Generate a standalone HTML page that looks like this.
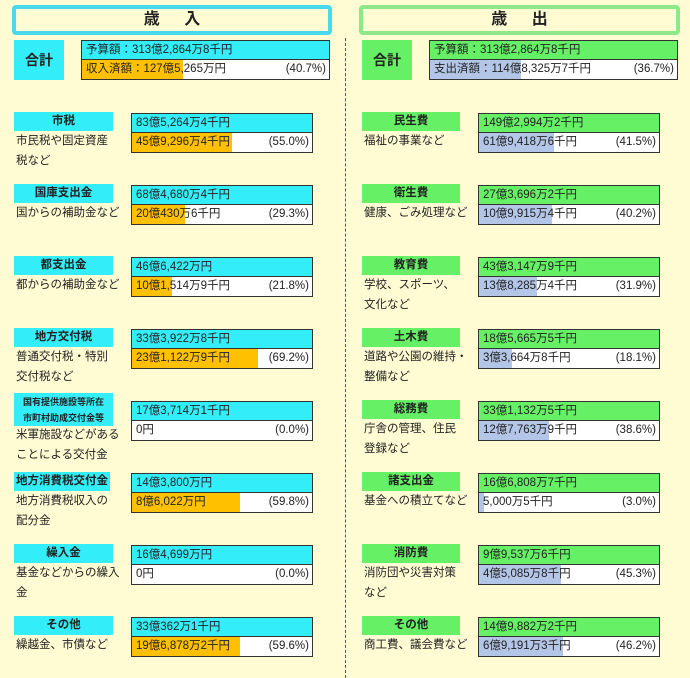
<!DOCTYPE html><html><head><meta charset="utf-8"><style>
*{margin:0;padding:0;box-sizing:border-box}
body{width:690px;height:678px;background:#fff;font-family:"Liberation Sans","Noto Sans CJK JP",sans-serif;font-size:11.5px;color:#222;position:relative;overflow:hidden}
.bg{position:absolute;left:0;top:0;width:690px;height:678px;background:#fffbd2}
.title{position:absolute;top:5px;height:30px;border-radius:4px;background:#fffbd2;text-align:center;font-weight:bold;font-size:16px;line-height:22px;letter-spacing:10px;padding-left:10px}
.lab{position:absolute;height:19px;text-align:center;font-weight:bold;line-height:19px;font-size:11.5px}
.box{position:absolute;border:1px solid #333;background:#fff}
.r1{height:19px;line-height:19px;padding-left:4px;border-bottom:1px solid #333}
.r2{height:19px;line-height:19px;position:relative}
.fill{position:absolute;left:0;top:0;bottom:0}
.t{position:absolute;left:4px;top:0}
.p{position:absolute;right:3px;top:0}
.desc{position:absolute;line-height:20px;font-size:11.5px}
.c{background:#33eef8}.g{background:#66f066}.o{background:#ffc000}.b{background:#b4c6e7}
.div{position:absolute;left:345px;top:38px;height:640px;border-left:1px dashed #555}
</style></head><body><div class="bg"></div>
<div class="title" style="left:12px;width:320px;border:4px solid #4ad8ec">歳 入</div>
<div class="title" style="left:359px;width:321px;border:4px solid #8ee88a">歳 出</div>
<div class="div"></div>

<div class="lab c" style="left:14px;top:40px;width:50px;height:40px;line-height:40px;font-size:14px">合計</div>
<div class="box" style="left:81px;top:40px;width:249px;height:40px"><div class="r1 c">予算額：313億2,864万8千円</div><div class="r2"><div class="fill o" style="width:101px"></div><span class="t">収入済額：127億5,265万円</span><span class="p">(40.7%)</span></div></div>

<div class="lab g" style="left:362px;top:40px;width:50px;height:40px;line-height:40px;font-size:14px">合計</div>
<div class="box" style="left:429px;top:40px;width:249px;height:40px"><div class="r1 g">予算額：313億2,864万8千円</div><div class="r2"><div class="fill b" style="width:91px"></div><span class="t">支出済額：114億8,325万7千円</span><span class="p">(36.7%)</span></div></div>

<div class="lab c" style="left:14px;top:112px;width:99px">市税</div>
<div class="desc" style="left:16px;top:131px">市民税や固定資産<br>税など</div>
<div class="box" style="left:131px;top:113px;width:182px;height:40px"><div class="r1 c">83億5,264万4千円</div><div class="r2"><div class="fill o" style="width:100px"></div><span class="t">45億9,296万4千円</span><span class="p">(55.0%)</span></div></div>

<div class="lab c" style="left:14px;top:184px;width:99px">国庫支出金</div>
<div class="desc" style="left:16px;top:203px">国からの補助金など</div>
<div class="box" style="left:131px;top:185px;width:182px;height:40px"><div class="r1 c">68億4,680万4千円</div><div class="r2"><div class="fill o" style="width:53px"></div><span class="t">20億430万6千円</span><span class="p">(29.3%)</span></div></div>

<div class="lab c" style="left:14px;top:256px;width:99px">都支出金</div>
<div class="desc" style="left:16px;top:275px">都からの補助金など</div>
<div class="box" style="left:131px;top:257px;width:182px;height:40px"><div class="r1 c">46億6,422万円</div><div class="r2"><div class="fill o" style="width:40px"></div><span class="t">10億1,514万9千円</span><span class="p">(21.8%)</span></div></div>

<div class="lab c" style="left:14px;top:328px;width:99px">地方交付税</div>
<div class="desc" style="left:16px;top:347px">普通交付税・特別<br>交付税など</div>
<div class="box" style="left:131px;top:329px;width:182px;height:40px"><div class="r1 c">33億3,922万8千円</div><div class="r2"><div class="fill o" style="width:126px"></div><span class="t">23億1,122万9千円</span><span class="p">(69.2%)</span></div></div>

<div class="lab c" style="left:14px;top:393px;width:99px;height:33px;line-height:16px;font-size:9px;padding-top:1px">国有提供施設等所在<br>市町村助成交付金等</div>
<div class="desc" style="left:16px;top:425px">米軍施設などがある<br>ことによる交付金</div>
<div class="box" style="left:131px;top:401px;width:182px;height:40px"><div class="r1 c">17億3,714万1千円</div><div class="r2"><span class="t">0円</span><span class="p">(0.0%)</span></div></div>

<div class="lab c" style="left:14px;top:472px;width:96px">地方消費税交付金</div>
<div class="desc" style="left:16px;top:491px">地方消費税収入の<br>配分金</div>
<div class="box" style="left:131px;top:473px;width:182px;height:40px"><div class="r1 c">14億3,800万円</div><div class="r2"><div class="fill o" style="width:108px"></div><span class="t">8億6,022万円</span><span class="p">(59.8%)</span></div></div>

<div class="lab c" style="left:14px;top:544px;width:99px">繰入金</div>
<div class="desc" style="left:16px;top:563px">基金などからの繰入<br>金</div>
<div class="box" style="left:131px;top:545px;width:182px;height:40px"><div class="r1 c">16億4,699万円</div><div class="r2"><span class="t">0円</span><span class="p">(0.0%)</span></div></div>

<div class="lab c" style="left:14px;top:616px;width:99px">その他</div>
<div class="desc" style="left:16px;top:635px">繰越金、市債など</div>
<div class="box" style="left:131px;top:617px;width:182px;height:40px"><div class="r1 c">33億362万1千円</div><div class="r2"><div class="fill o" style="width:108px"></div><span class="t">19億6,878万2千円</span><span class="p">(59.6%)</span></div></div>

<div class="lab g" style="left:362px;top:112px;width:98px">民生費</div>
<div class="desc" style="left:364px;top:131px">福祉の事業など</div>
<div class="box" style="left:478px;top:113px;width:182px;height:40px"><div class="r1 g">149億2,994万2千円</div><div class="r2"><div class="fill b" style="width:75px"></div><span class="t">61億9,418万6千円</span><span class="p">(41.5%)</span></div></div>

<div class="lab g" style="left:362px;top:184px;width:98px">衛生費</div>
<div class="desc" style="left:364px;top:203px">健康、ごみ処理など</div>
<div class="box" style="left:478px;top:185px;width:182px;height:40px"><div class="r1 g">27億3,696万2千円</div><div class="r2"><div class="fill b" style="width:73px"></div><span class="t">10億9,915万4千円</span><span class="p">(40.2%)</span></div></div>

<div class="lab g" style="left:362px;top:256px;width:98px">教育費</div>
<div class="desc" style="left:364px;top:275px">学校、スポーツ、<br>文化など</div>
<div class="box" style="left:478px;top:257px;width:182px;height:40px"><div class="r1 g">43億3,147万9千円</div><div class="r2"><div class="fill b" style="width:58px"></div><span class="t">13億8,285万4千円</span><span class="p">(31.9%)</span></div></div>

<div class="lab g" style="left:362px;top:328px;width:98px">土木費</div>
<div class="desc" style="left:364px;top:347px">道路や公園の維持・<br>整備など</div>
<div class="box" style="left:478px;top:329px;width:182px;height:40px"><div class="r1 g">18億5,665万5千円</div><div class="r2"><div class="fill b" style="width:33px"></div><span class="t">3億3,664万8千円</span><span class="p">(18.1%)</span></div></div>

<div class="lab g" style="left:362px;top:400px;width:98px">総務費</div>
<div class="desc" style="left:364px;top:419px">庁舎の管理、住民<br>登録など</div>
<div class="box" style="left:478px;top:401px;width:182px;height:40px"><div class="r1 g">33億1,132万5千円</div><div class="r2"><div class="fill b" style="width:70px"></div><span class="t">12億7,763万9千円</span><span class="p">(38.6%)</span></div></div>

<div class="lab g" style="left:362px;top:472px;width:98px">諸支出金</div>
<div class="desc" style="left:364px;top:491px">基金への積立てなど</div>
<div class="box" style="left:478px;top:473px;width:182px;height:40px"><div class="r1 g">16億6,808万7千円</div><div class="r2"><div class="fill b" style="width:5px"></div><span class="t">5,000万5千円</span><span class="p">(3.0%)</span></div></div>

<div class="lab g" style="left:362px;top:544px;width:98px">消防費</div>
<div class="desc" style="left:364px;top:563px">消防団や災害対策<br>など</div>
<div class="box" style="left:478px;top:545px;width:182px;height:40px"><div class="r1 g">9億9,537万6千円</div><div class="r2"><div class="fill b" style="width:82px"></div><span class="t">4億5,085万8千円</span><span class="p">(45.3%)</span></div></div>

<div class="lab g" style="left:362px;top:616px;width:98px">その他</div>
<div class="desc" style="left:364px;top:635px">商工費、議会費など</div>
<div class="box" style="left:478px;top:617px;width:182px;height:40px"><div class="r1 g">14億9,882万2千円</div><div class="r2"><div class="fill b" style="width:84px"></div><span class="t">6億9,191万3千円</span><span class="p">(46.2%)</span></div></div>
</body></html>
